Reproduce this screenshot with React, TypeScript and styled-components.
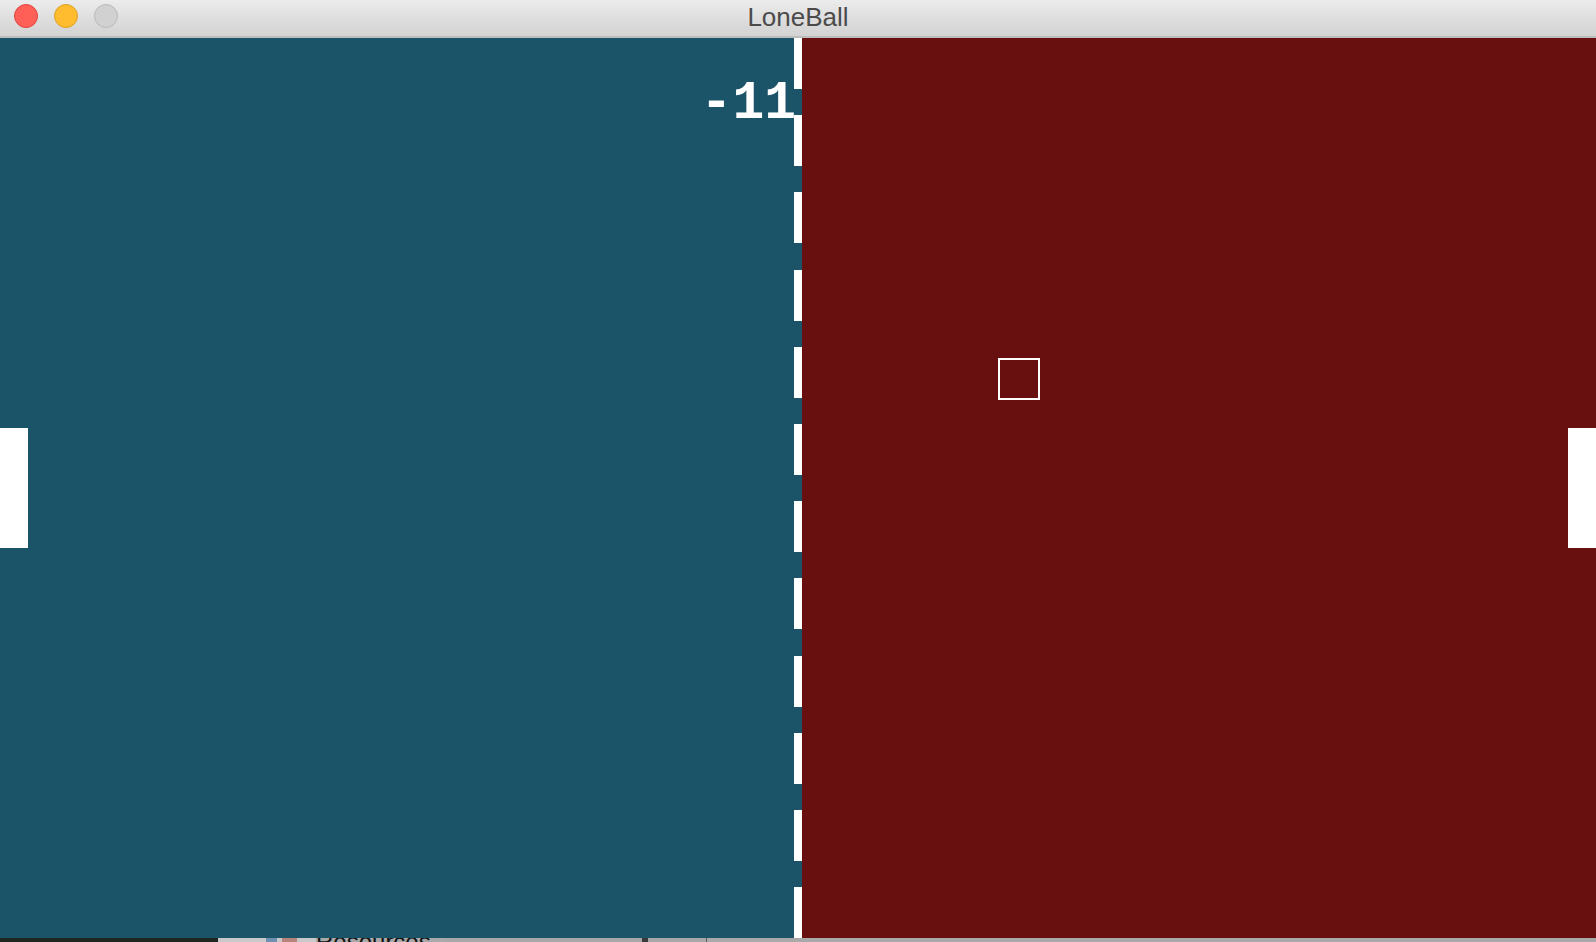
import React from "react";
import styled, { createGlobalStyle } from "styled-components";

const GlobalStyle = createGlobalStyle`
  html, body {
    margin: 0;
    padding: 0;
    background: #1c1f1c;
    overflow: hidden;
  }
  * { box-sizing: border-box; }
`;

const Window = styled.div`
  width: 1596px;
  height: 942px;
  display: flex;
  flex-direction: column;
  overflow: hidden;
`;

const TitleBar = styled.div`
  height: 38px;
  flex: none;
  display: grid;
  grid-template-columns: 1fr auto 1fr;
  align-items: start;
  background: linear-gradient(to bottom, #ececec 0%, #dcdcdc 60%, #d3d3d3 100%);
  border-bottom: 2px solid #bdbdbd;
`;

const Lights = styled.div`
  display: flex;
  gap: 16px;
  padding: 4px 0 0 14px;
`;

const Light = styled.span<{ $fill: string; $edge: string }>`
  width: 24px;
  height: 24px;
  border-radius: 50%;
  background: ${(p) => p.$fill};
  border: 1px solid ${(p) => p.$edge};
`;

const Title = styled.div`
  font-family: "Liberation Sans", Arial, sans-serif;
  font-size: 26px;
  line-height: 34px;
  color: #4b4b4b;
  padding-top: 0px;
`;

const Field = styled.div`
  height: 900px;
  flex: none;
  display: flex;
`;

const Court = styled.div<{ $color: string }>`
  position: relative;
  flex: 1;
  background: ${(p) => p.$color};
`;

const CenterLine = styled.div`
  width: 8px;
  flex: none;
  background-color: #1b5468;
  background-image: repeating-linear-gradient(
    to bottom,
    #ffffff 0px,
    #ffffff 51px,
    transparent 51px,
    transparent 77.2px
  );
`;

const Score = styled.div`
  position: absolute;
  top: 40px;
  right: -2px;
  font-family: "Liberation Mono", "Courier New", monospace;
  font-weight: 700;
  font-size: 53px;
  line-height: 53px;
  color: #ffffff;
  white-space: pre;
`;

const Paddle = styled.div<{ $side: "left" | "right" }>`
  position: absolute;
  top: 390px;
  ${(p) => (p.$side === "left" ? "left: 0;" : "right: 0;")}
  width: 28px;
  height: 120px;
  background: #ffffff;
`;

const Ball = styled.div`
  position: absolute;
  left: 196px;
  top: 320px;
  width: 42px;
  height: 42px;
  border: 2px solid #ffffff;
`;

const Desktop = styled.div`
  height: 4px;
  flex: none;
  display: flex;
  overflow: hidden;
  background: #a9a9a9;
`;

const DeskSeg = styled.div<{ $w: number; $bg: string }>`
  width: ${(p) => p.$w}px;
  flex: none;
  height: 100%;
  background: ${(p) => p.$bg};
`;

const DeskLabel = styled.div`
  flex: none;
  width: 130px;
  margin-top: -8px;
  font-family: "Liberation Sans", Arial, sans-serif;
  font-size: 24px;
  line-height: 24px;
  color: #111111;
`;

export default function App() {
  return (
    <>
      <GlobalStyle />
      <Window>
        <TitleBar>
          <Lights>
            <Light $fill="#fe5f57" $edge="#e0443e" />
            <Light $fill="#febc2e" $edge="#dea123" />
            <Light $fill="#d1d1d1" $edge="#b9b9b9" />
          </Lights>
          <Title>LoneBall</Title>
          <div />
        </TitleBar>
        <Field>
          <Court $color="#1b5468">
            <Score>-11</Score>
            <Paddle $side="left" />
          </Court>
          <CenterLine />
          <Court $color="#680f0f">
            <Ball />
            <Paddle $side="right" />
          </Court>
        </Field>
        <Desktop>
          <DeskSeg $w={218} $bg="#1e2820" />
          <DeskSeg $w={48} $bg="#c9c9c9" />
          <DeskSeg $w={11} $bg="#6f8fb0" />
          <DeskSeg $w={5} $bg="#c9c9c9" />
          <DeskSeg $w={15} $bg="#b5857c" />
          <DeskSeg $w={19} $bg="#c9c9c9" />
          <DeskLabel>Resources</DeskLabel>
          <DeskSeg $w={196} $bg="#a7a7a7" />
          <DeskSeg $w={6} $bg="#3a3a3a" />
          <DeskSeg $w={58} $bg="#a7a7a7" />
          <DeskSeg $w={1} $bg="#5a5a5a" />
        </Desktop>
      </Window>
    </>
  );
}
